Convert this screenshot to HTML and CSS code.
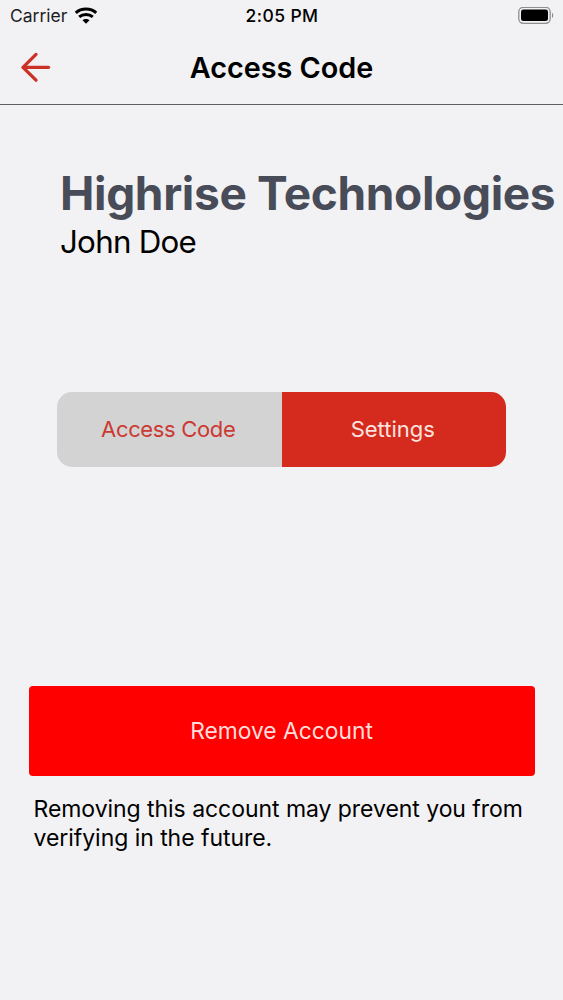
FILE: index.html
```html
<!DOCTYPE html>
<html lang="en">
<head>
    <meta charset="UTF-8">
    <meta name="viewport" content="width=device-width, initial-scale=1.0">
    <title>Access Code</title>
    <link rel="stylesheet" href="styles.css">
</head>
<body>
    <div class="status-bar">
        <div class="carrier">
            <span>Carrier</span>
            <svg class="wifi" width="24" height="18" viewBox="0 0 24 18" fill="none" stroke="#000" stroke-width="3.1">
                <path d="M1.8 5.8C7.4 0.8 16.6 0.8 22.2 5.8"/>
                <path d="M5.2 9.9C9 6.7 15 6.7 18.8 9.9"/>
                <path d="M12 16.8L8.5 13.3C10.4 11.5 13.6 11.5 15.5 13.3Z" fill="#000" stroke="none"/>
            </svg>
        </div>
        <span class="time">2:05 PM</span>
        <div class="battery">
            <svg width="36" height="18" viewBox="0 0 36 18">
                <rect x="0.8" y="0.3" width="31.4" height="16" rx="4.5" fill="none" stroke="#8f8e91" stroke-width="1.3"/>
                <rect x="3" y="2.5" width="27" height="11.6" rx="2.4" fill="#000"/>
                <path d="M34 5.7C35.7 6.5 35.7 10.1 34 10.9Z" fill="#8f8e91"/>
            </svg>
        </div>
    </div>

    <header class="header">
        <button class="back" aria-label="Back">
            <svg width="32" height="32" viewBox="0 0 32 32" fill="none" stroke="#cb3127" stroke-width="3.3" stroke-linecap="round" stroke-linejoin="round">
                <path d="M17 2.4L4 15.3L17 28.2"/>
                <path d="M4.5 15.3H29.5"/>
            </svg>
        </button>
        <h1 class="title">Access Code</h1>
    </header>

    <main class="content">
        <div class="account">
            <h2 class="company">Highrise Technologies</h2>
            <p class="user">John Doe</p>
        </div>

        <div class="tabs">
            <button class="tab tab-code">Access Code</button>
            <button class="tab tab-settings">Settings</button>
        </div>

        <div class="remove">
            <button class="remove-button">Remove Account</button>
            <p class="remove-note">Removing this account may prevent you from verifying in the future.</p>
        </div>
    </main>
</body>
</html>
```

FILE: styles.css
```css
* {
    box-sizing: border-box;
}
body {
    margin: 0;
    height: 1000px;
    overflow: hidden;
    font-family: Inter, "Liberation Sans", sans-serif;
    background-color: #f2f1f3;
    color: #000;
}
h1, h2, p {
    margin: 0;
}
button {
    padding: 0;
    border: none;
    font-family: inherit;
}
.status-bar {
    display: grid;
    grid-template-columns: 1fr auto 1fr;
    align-items: center;
    height: 31px;
    padding: 0 9px 0 10px;
}
.carrier {
    display: flex;
    align-items: center;
    gap: 7px;
    font-size: 17.5px;
    color: #1c1c1e;
}
.wifi {
    display: block;
}
.time {
    font-size: 17.5px;
    font-weight: 500;
    letter-spacing: 0.4px;
}
.battery {
    display: flex;
    justify-content: flex-end;
}
.header {
    display: grid;
    grid-template-columns: 60px 1fr 60px;
    align-items: center;
    height: 74px;
    padding: 0;
    border-bottom: 1px solid #5f5f61;
}
.back {
    display: flex;
    padding-left: 19px;
    background: none;
}
.title {
    font-size: 28.8px;
    font-weight: 600;
    text-align: center;
}
.account {
    padding: 60px 0 0 60px;
    white-space: nowrap;
}
.company {
    font-size: 46px;
    line-height: 57px;
    font-weight: 700;
    letter-spacing: -0.35px;
    color: #474c58;
}
.user {
    font-size: 31.3px;
    line-height: 40px;
    letter-spacing: -0.75px;
}
.tabs {
    display: flex;
    height: 75px;
    margin: 130px 57px 0;
    border-radius: 15px;
    overflow: hidden;
}
.tab {
    flex: 1;
    padding: 0 2px 2px 0;
    font-size: 22px;
}
.tab-code {
    background-color: #d3d3d4;
    color: #cb3a32;
    letter-spacing: -0.35px;
}
.tab-settings {
    background-color: #d52b1e;
    color: #fbe3df;
}
.remove {
    margin: 219px 28px 0 29px;
}
.remove-button {
    display: block;
    width: 100%;
    height: 90px;
    padding: 0 1px 2px 0;
    border-radius: 4px;
    background-color: #fe0000;
    color: #ffdedb;
    font-size: 22.8px;
}
.remove-note {
    padding: 19px 0 0 4.5px;
    font-size: 23px;
    line-height: 28.5px;
    letter-spacing: -0.05px;
}
```
